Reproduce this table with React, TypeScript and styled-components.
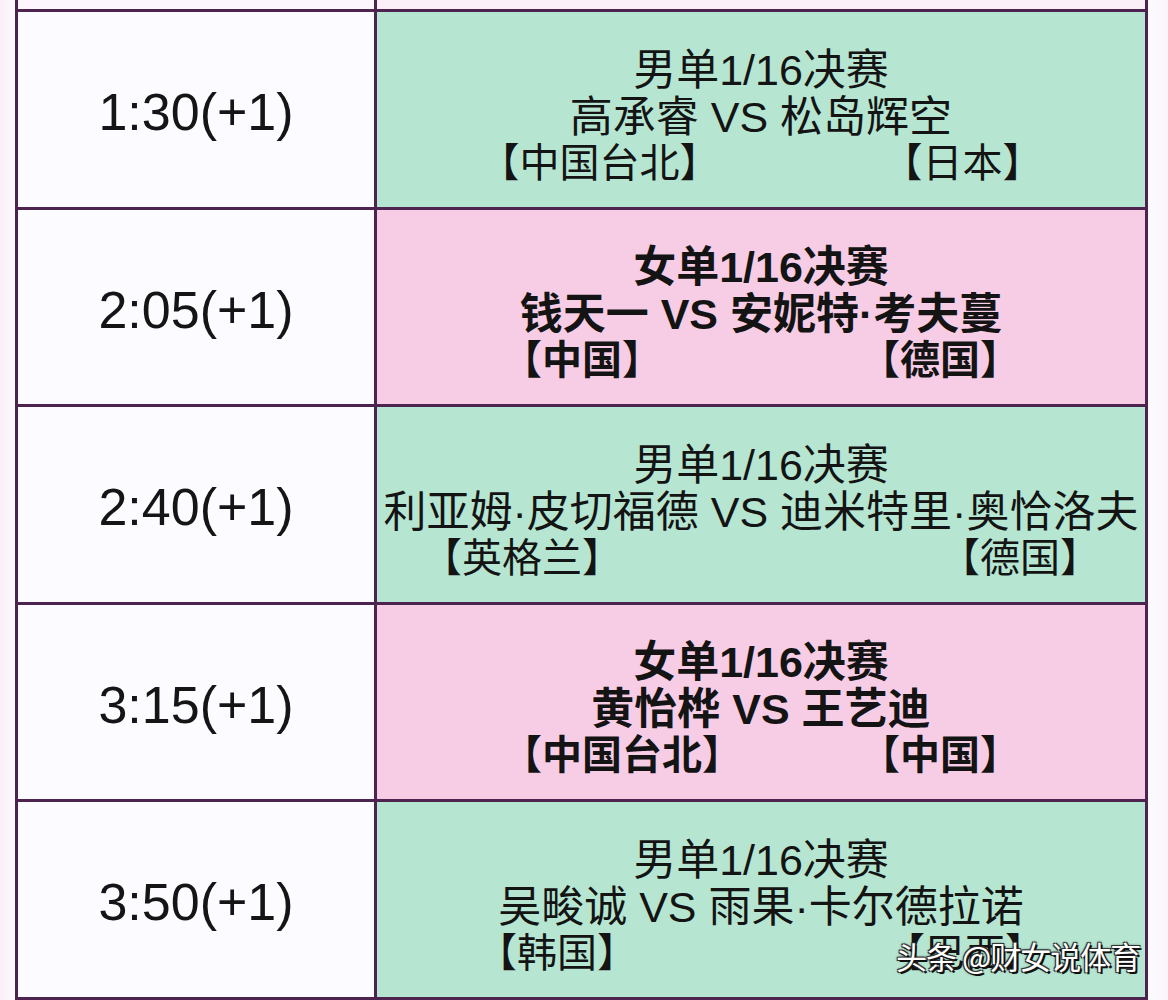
import React from "react";
import styled, { createGlobalStyle } from "styled-components";

const Global = createGlobalStyle`
  html, body { margin: 0; padding: 0; background: #fdf9fd; }
  body { width: 1168px; height: 1000px; overflow: hidden; }
`;

const Page = styled.div`
  width: 1168px;
  height: 1000px;
  position: relative;
  padding-left: 15px;
  box-sizing: border-box;
  background: linear-gradient(90deg, #fbeef9 0px, #fdfbfe 15px, #fdfbfe 1148px, #fbf4fb 1168px);
`;

const Table = styled.div`
  width: fit-content;
  display: grid;
  grid-template-columns: 356px 768px;
  grid-template-rows: 9px repeat(5, 194.5px);
  gap: 3px;
  background: #4d2350;
  border: 3px solid #4d2350;
  border-top: none;
`;

const TopStrip = styled.div<{ $tone: string }>`
  background: ${(p) => p.$tone};
`;

const TimeCell = styled.div`
  background: #fcfbff;
  display: flex;
  align-items: center;
  justify-content: center;
  font-family: "Liberation Sans", Arial, sans-serif;
  font-size: 52px;
  color: #151515;
  padding-top: 6px;
  box-sizing: border-box;
`;

const MatchCell = styled.div<{ $pink: boolean; $bold: boolean }>`
  background: ${(p) => (p.$pink ? "#f7cde6" : "#b6e6d2")};
  display: flex;
  flex-direction: column;
  align-items: center;
  justify-content: center;
  padding-top: 13px;
  box-sizing: border-box;
  font-family: "Liberation Sans", "Noto Sans CJK SC", sans-serif;
  font-weight: ${(p) => (p.$bold ? 700 : 400)};
  color: #141414;
  white-space: nowrap;
`;

const Stage = styled.div`
  font-size: 43px;
  line-height: 46px;
`;

const Players = styled.div`
  font-size: 43px;
  line-height: 48px;
`;

const Countries = styled.div<{ $gap: number }>`
  display: flex;
  justify-content: center;
  gap: ${(p) => p.$gap}px;
  font-size: 40px;
  line-height: 44px;
`;

const Watermark = styled.div`
  position: absolute;
  left: 896px;
  top: 934px;
  font-family: "Noto Sans CJK SC", sans-serif;
  font-size: 31px;
  line-height: 44px;
  color: #ffffff;
  letter-spacing: -1px;
  text-shadow: 2px 2px 0 #111, -1px -1px 0 #333, 1px -1px 0 #333, -1px 1px 0 #333,
    0 0 3px #000;
`;

type Row = {
  time: string;
  pink: boolean;
  stage: string;
  players: string;
  left: string;
  right: string;
  gap: number;
};

const rows: Row[] = [
  { time: "1:30(+1)", pink: false, stage: "男单1/16决赛", players: "高承睿 VS 松岛辉空", left: "【中国台北】", right: "【日本】", gap: 163 },
  { time: "2:05(+1)", pink: true, stage: "女单1/16决赛", players: "钱天一 VS 安妮特·考夫蔓", left: "【中国】", right: "【德国】", gap: 198 },
  { time: "2:40(+1)", pink: false, stage: "男单1/16决赛", players: "利亚姆·皮切福德 VS 迪米特里·奥恰洛夫", left: "【英格兰】", right: "【德国】", gap: 318 },
  { time: "3:15(+1)", pink: true, stage: "女单1/16决赛", players: "黄怡桦 VS 王艺迪", left: "【中国台北】", right: "【中国】", gap: 118 },
  { time: "3:50(+1)", pink: false, stage: "男单1/16决赛", players: "吴畯诚 VS 雨果·卡尔德拉诺", left: "【韩国】", right: "【巴西】", gap: 248 },
];

export default function App() {
  return (
    <>
      <Global />
      <Page>
        <Table>
          <TopStrip $tone="#fdf6fc" />
          <TopStrip $tone="#fcf0f8" />
          {rows.map((r) => (
            <React.Fragment key={r.time}>
              <TimeCell>{r.time}</TimeCell>
              <MatchCell $pink={r.pink} $bold={r.pink}>
                <Stage>{r.stage}</Stage>
                <Players>{r.players}</Players>
                <Countries $gap={r.gap}>
                  <span>{r.left}</span>
                  <span>{r.right}</span>
                </Countries>
              </MatchCell>
            </React.Fragment>
          ))}
        </Table>
        <Watermark>头条 @财女说体育</Watermark>
      </Page>
    </>
  );
}
